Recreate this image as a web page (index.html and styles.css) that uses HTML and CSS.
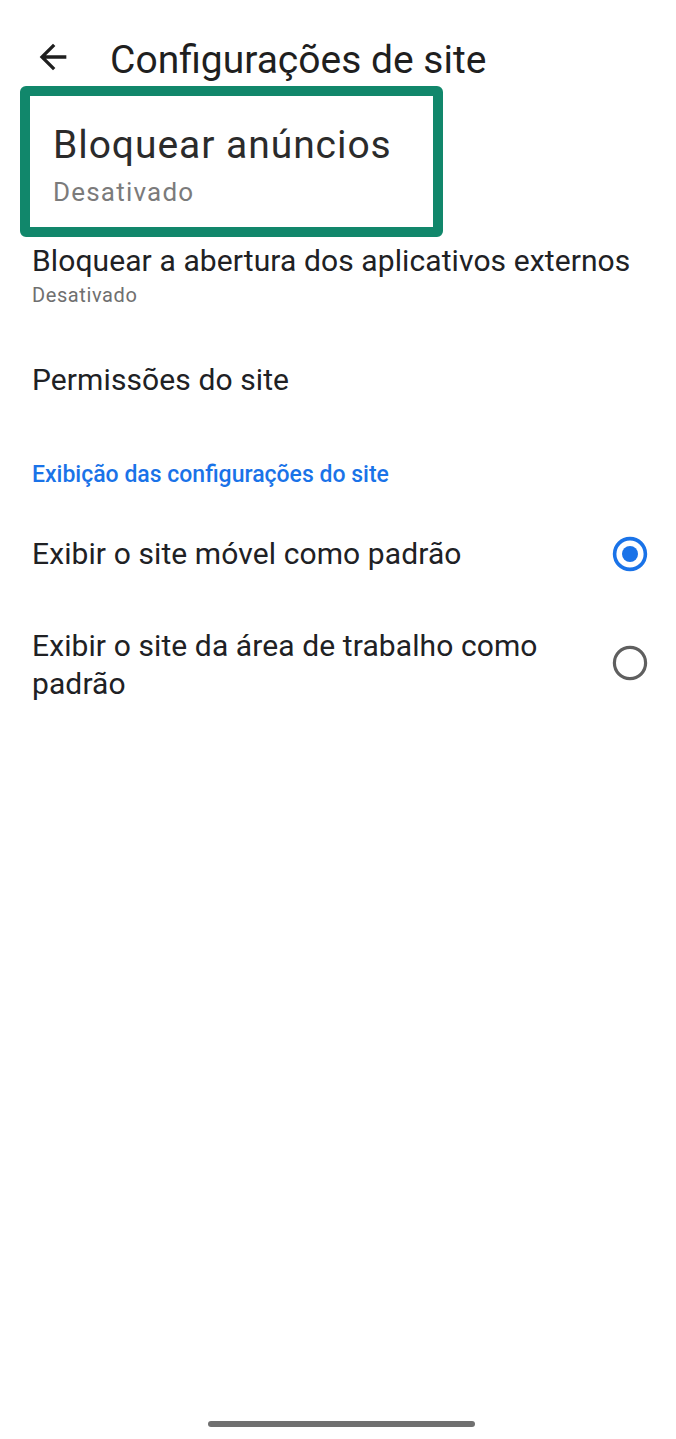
FILE: index.html
```html
<!DOCTYPE html>
<html lang="pt-BR">
<head>
<meta charset="utf-8">
<title>Configurações de site</title>
<link rel="stylesheet" href="styles.css">
</head>
<body>
<div class="screen">
  <header class="topbar">
    <svg class="back" viewBox="0 0 24 24" width="40" height="40" aria-hidden="true">
      <path d="M20 11H7.83l5.59-5.59L12 4l-8 8 8 8 1.41-1.41L7.83 13H20v-2z" fill="#1f1f1f"/>
    </svg>
    <h1 class="title">Configurações de site</h1>
  </header>

  <div class="highlight">
    <div class="hl-title">Bloquear anúncios</div>
    <div class="hl-sub">Desativado</div>
  </div>

  <div class="item item-ext">
    <div class="item-title">Bloquear a abertura dos aplicativos externos</div>
    <div class="item-sub">Desativado</div>
  </div>

  <div class="item item-perm">
    <div class="item-title">Permissões do site</div>
  </div>

  <div class="section-head">Exibição das configurações do site</div>

  <div class="radio-row row-mobile">
    <div class="radio-label">Exibir o site móvel como padrão</div>
    <svg class="radio" viewBox="0 0 36 36" width="36" height="36" aria-hidden="true">
      <circle cx="18" cy="18" r="15.4" fill="none" stroke="#1a73e8" stroke-width="3.6"/>
      <circle cx="18" cy="18" r="8" fill="#1a73e8"/>
    </svg>
  </div>

  <div class="radio-row row-desktop">
    <div class="radio-label">Exibir o site da área de trabalho como padrão</div>
    <svg class="radio radio-off" viewBox="0 0 36 36" width="36" height="36" aria-hidden="true">
      <circle cx="18" cy="18" r="15.6" fill="none" stroke="#5f5f5f" stroke-width="3.2"/>
    </svg>
  </div>

  <div class="navbar"></div>
</div>
</body>
</html>
```

FILE: styles.css
```css
* {
  box-sizing: border-box;
}

html, body {
  margin: 0;
  padding: 0;
  background: #ffffff;
}

body {
  font-family: Roboto, "Noto Sans", "Liberation Sans", sans-serif;
  color: #202124;
}

.screen {
  width: 676px;
  min-height: 1439px;
  display: flex;
  flex-direction: column;
  align-items: flex-start;
}

.topbar {
  display: flex;
  align-items: flex-start;
  gap: 37px;
  padding: 37px 0 0 33px;
}

.back {
  display: block;
  flex: none;
}

.title {
  margin: 0;
  font-size: 39px;
  line-height: 46px;
  font-weight: 400;
  color: #1f1f1f;
  white-space: nowrap;
}

.highlight {
  margin: 3px 0 0 20px;
  width: 423px;
  height: 151px;
  border: 10px solid #11876b;
  border-radius: 6px;
  padding: 26px 0 0 23px;
}

.hl-title {
  font-size: 39px;
  line-height: 46px;
  letter-spacing: 0.95px;
  color: #2b2b2b;
  white-space: nowrap;
}

.hl-sub {
  margin-top: 8px;
  font-size: 26px;
  line-height: 32px;
  letter-spacing: 1.2px;
  color: #7b7b7b;
}

.item {
  padding-left: 32px;
}

.item-ext {
  margin-top: 6px;
}

.item-perm {
  margin-top: 55px;
}

.item-title {
  font-size: 30px;
  line-height: 36px;
  letter-spacing: 0.1px;
  color: #202124;
  white-space: nowrap;
}

.item-sub {
  margin-top: 4px;
  font-size: 20px;
  line-height: 24px;
  letter-spacing: 0.6px;
  color: #6f6f6f;
}

.section-head {
  margin-top: 63px;
  padding-left: 32px;
  font-size: 23px;
  line-height: 28px;
  font-weight: 500;
  color: #1a73e8;
}

.radio-row {
  align-self: stretch;
  display: flex;
  align-items: center;
  gap: 20px;
  padding: 0 28px 0 32px;
}

.row-mobile {
  margin-top: 47px;
}

.row-desktop {
  margin-top: 55px;
}

.radio-label {
  flex: 1;
  font-size: 30px;
  line-height: 36px;
  letter-spacing: 0.1px;
  color: #202124;
}

.row-desktop .radio-label {
  line-height: 38px;
}

.radio {
  display: block;
  flex: none;
}

.radio-off {
  margin-bottom: 4px;
}

.navbar {
  margin: auto 0 12px 208px;
  width: 267px;
  height: 6px;
  border-radius: 3px;
  background: #707070;
}
```
